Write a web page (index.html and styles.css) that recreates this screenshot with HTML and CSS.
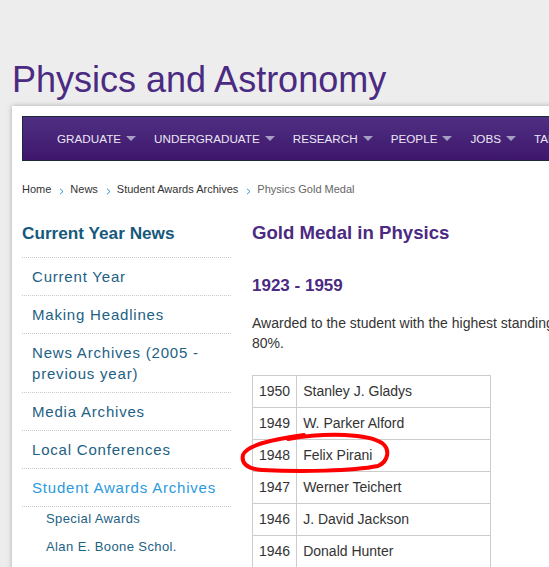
FILE: index.html
```html
<!DOCTYPE html>
<html>
<head>
<meta charset="utf-8">
<link rel="stylesheet" href="styles.css">
</head>
<body>
<h1 class="site-title">Physics and Astronomy</h1>
<div class="card">
  <nav class="topnav">
    <span class="nav-item">GRADUATE <i class="caret"></i></span>
    <span class="nav-item">UNDERGRADUATE <i class="caret"></i></span>
    <span class="nav-item">RESEARCH <i class="caret"></i></span>
    <span class="nav-item">PEOPLE <i class="caret"></i></span>
    <span class="nav-item">JOBS <i class="caret"></i></span>
    <span class="nav-item">TALKS <i class="caret"></i></span>
  </nav>
  <div class="crumbs">
    <span>Home</span>
    <svg class="chev" width="5" height="7" viewBox="0 0 5 7"><path d="M1 0.8 L4 3.5 L1 6.2" fill="none" stroke="#2a97d6" stroke-width="1"/></svg>
    <span>News</span>
    <svg class="chev" width="5" height="7" viewBox="0 0 5 7"><path d="M1 0.8 L4 3.5 L1 6.2" fill="none" stroke="#2a97d6" stroke-width="1"/></svg>
    <span>Student Awards Archives</span>
    <svg class="chev" width="5" height="7" viewBox="0 0 5 7"><path d="M1 0.8 L4 3.5 L1 6.2" fill="none" stroke="#2a97d6" stroke-width="1"/></svg>
    <span class="current">Physics Gold Medal</span>
  </div>
  <div class="columns">
    <aside class="sidebar">
      <h2 class="side-title">Current Year News</h2>
      <ul class="side-list">
        <li class="side-item">Current Year</li>
        <li class="side-item">Making Headlines</li>
        <li class="side-item">News Archives (2005 - previous year)</li>
        <li class="side-item">Media Archives</li>
        <li class="side-item">Local Conferences</li>
        <li class="side-item active">Student Awards Archives</li>
      </ul>
      <ul class="sub-list">
        <li class="sub-item">Special Awards</li>
        <li class="sub-item">Alan E. Boone Schol.</li>
      </ul>
    </aside>
    <main class="main">
      <h2 class="page-title">Gold Medal in Physics</h2>
      <h3 class="period">1923 - 1959</h3>
      <p class="intro">Awarded to the student with the highest standing in the graduating class, with an average of at least<br>80%.</p>
      <div class="table-wrap">
        <table class="winners">
          <tr><td class="yr">1950</td><td class="nm">Stanley J. Gladys</td></tr>
          <tr><td class="yr">1949</td><td class="nm">W. Parker Alford</td></tr>
          <tr><td class="yr">1948</td><td class="nm">Felix Pirani</td></tr>
          <tr><td class="yr">1947</td><td class="nm">Werner Teichert</td></tr>
          <tr><td class="yr">1946</td><td class="nm">J. David Jackson</td></tr>
          <tr><td class="yr">1946</td><td class="nm">Donald Hunter</td></tr>
          <tr><td class="yr">1945</td><td class="nm">Robert Smith</td></tr>
        </table>
        <svg class="scribble" width="160" height="50" viewBox="0 0 160 50">
          <path d="M48 9 C 88 2, 128 4, 142 13 C 150 19, 149 31, 138 36 C 112 41, 62 42, 22 40 C 7 39, 1 33, 3 25 C 6 16, 28 10, 64 5" fill="none" stroke="#ff0000" stroke-width="4" stroke-linecap="round" stroke-linejoin="round"/>
        </svg>
      </div>
    </main>
  </div>
</div>
</body>
</html>
```
FILE: styles.css
```css
html, body {
  margin: 0;
  padding: 0;
  overflow: hidden;
}
body {
  background: #ededed;
  font-family: "Liberation Sans", Arial, sans-serif;
  width: 549px;
  height: 567px;
}
.site-title {
  margin: 0;
  padding: 59px 0 0 12px;
  font-size: 36px;
  line-height: 41px;
  font-weight: normal;
  color: #4b2a82;
  white-space: nowrap;
}
.card {
  margin: 6px 0 0 12px;
  width: 900px;
  height: 600px;
  background: #fff;
  box-shadow: 0 0 5px rgba(0,0,0,0.28);
  padding: 10px 0 0 10px;
  box-sizing: border-box;
}
.topnav {
  height: 45px;
  box-sizing: border-box;
  border: 1px solid #1c2a38;
  background: linear-gradient(#4f2f83, #3e176c);
  display: flex;
  align-items: center;
  padding-left: 34px;
  gap: 18px;
  white-space: nowrap;
}
.nav-item {
  color: #ebe7f3;
  font-size: 11.7px;
  display: flex;
  align-items: center;
  gap: 5px;
}
.caret {
  display: inline-block;
  width: 0;
  height: 0;
  border-left: 5.5px solid transparent;
  border-right: 5.5px solid transparent;
  border-top: 5px solid #a79ec3;
}
.crumbs {
  margin-top: 21px;
  font-size: 11px;
  line-height: 15px;
  color: #333;
  display: flex;
  align-items: center;
  gap: 6px;
  white-space: nowrap;
}
.crumbs .chev {
  margin: 3px 0 0 2px;
}
.crumbs .current {
  color: #666;
}
.columns {
  display: flex;
  gap: 21px;
  margin-top: 24px;
}
.sidebar {
  width: 209px;
  flex: none;
}
.side-title {
  margin: 0;
  font-size: 17.2px;
  line-height: 24px;
  font-weight: bold;
  color: #16597d;
  padding-bottom: 12px;
  border-bottom: 1px dotted #c8c8c8;
}
.side-list, .sub-list {
  list-style: none;
  margin: 0;
  padding: 0;
}
.side-item {
  padding: 8px 10px 8px 10px;
  font-size: 15px;
  line-height: 21px;
  letter-spacing: 0.8px;
  color: #1d6184;
  border-bottom: 1px dotted #c8c8c8;
}
.side-item.active {
  color: #2a9ade;
}
.sub-item {
  padding: 1px 0 6px 24px;
  font-size: 13px;
  line-height: 21px;
  letter-spacing: 0.4px;
  color: #1d6184;
}
.main {
  flex: none;
  width: 700px;
}
.page-title {
  margin: 0;
  font-size: 18.6px;
  line-height: 24px;
  font-weight: bold;
  color: #4b2a82;
}
.period {
  margin: 29px 0 0;
  font-size: 17px;
  line-height: 24px;
  font-weight: bold;
  color: #4b2a82;
}
.intro {
  margin: 15px 0 0;
  font-size: 14px;
  line-height: 20px;
  color: #333;
  white-space: nowrap;
}
.table-wrap {
  position: relative;
  margin-top: 22px;
}
.winners {
  border-collapse: collapse;
  width: 239px;
  font-size: 14px;
  color: #333;
}
.winners td {
  border: 1px solid #cccccc;
  padding: 5px 6px;
  line-height: 21px;
}
.winners .yr {
  width: 30px;
}
.scribble {
  position: absolute;
  left: -12px;
  top: 55px;
}
```
